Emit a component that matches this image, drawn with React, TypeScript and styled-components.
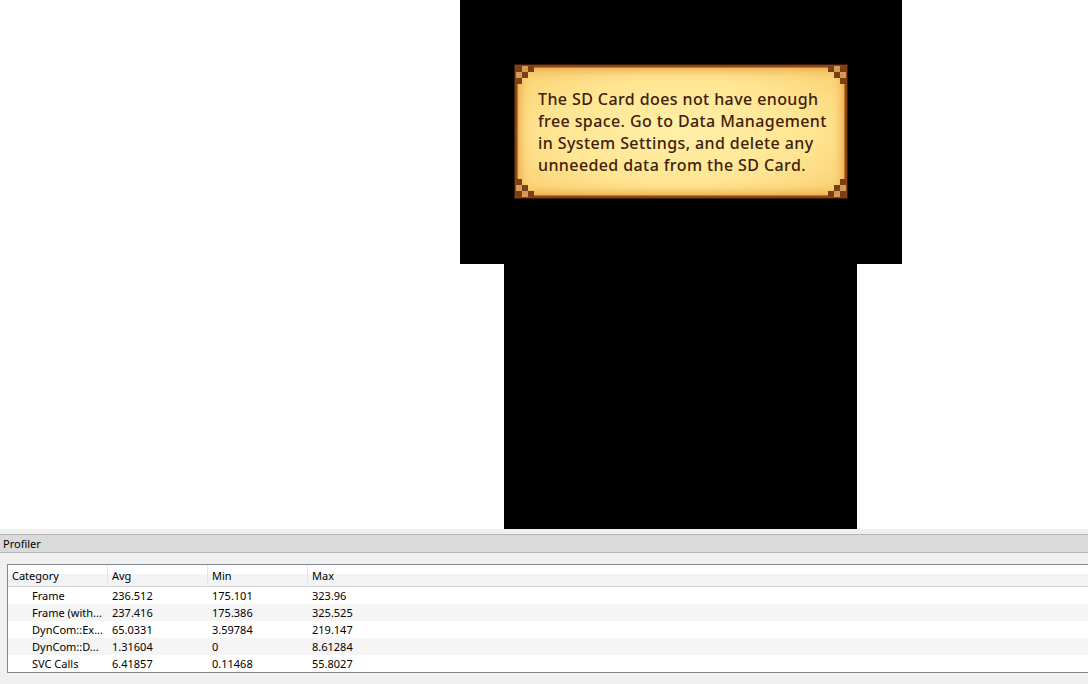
import styled, { createGlobalStyle } from 'styled-components';

const GlobalStyle = createGlobalStyle`
  html, body {
    margin: 0;
    padding: 0;
    background: #ffffff;
  }
  body {
    font-family: 'Noto Sans', 'Liberation Sans', sans-serif;
  }
`;

const ROWS = [
  { name: 'Frame', avg: '236.512', min: '175.101', max: '323.96' },
  { name: 'Frame (with...', avg: '237.416', min: '175.386', max: '325.525' },
  { name: 'DynCom::Ex...', avg: '65.0331', min: '3.59784', max: '219.147' },
  { name: 'DynCom::D...', avg: '1.31604', min: '0', max: '8.61284' },
  { name: 'SVC Calls', avg: '6.41857', min: '0.11468', max: '55.8027' },
];

const Corner = ({ flipX, flipY }: { flipX?: boolean; flipY?: boolean }) => (
  <CornerBox $flipX={flipX} $flipY={flipY}>
    <svg width="18" height="18" viewBox="0 0 18 18">
      <rect x="6" y="0" width="6" height="6" fill="#d69b55" />
      <rect x="0" y="6" width="6" height="6" fill="#d69b55" />
      <rect x="0" y="0" width="6" height="6" fill="#7a3f14" />
      <rect x="12" y="0" width="6" height="6" fill="#7a3f14" />
      <rect x="6" y="6" width="6" height="6" fill="#7a3f14" />
      <rect x="0" y="12" width="6" height="6" fill="#7a3f14" />
    </svg>
  </CornerBox>
);

const App = () => {
  return (
    <Page>
      <GlobalStyle />
      <Screens>
        <TopScreen>
          <Dialog>
            <Corner />
            <Corner flipX />
            <Corner flipY />
            <Corner flipX flipY />
            <Message>
              The SD Card does not have enough
              <br />
              free space. Go to Data Management
              <br />
              in System Settings, and delete any
              <br />
              unneeded data from the SD Card.
            </Message>
          </Dialog>
        </TopScreen>
        <BottomScreen />
      </Screens>
      <Dock>
        <DockTitle>Profiler</DockTitle>
        <DockBody>
          <Table>
            <HeaderRow>
              <HeaderCell>Category</HeaderCell>
              <HeaderCell>Avg</HeaderCell>
              <HeaderCell>Min</HeaderCell>
              <HeaderCell $last>Max</HeaderCell>
            </HeaderRow>
            {ROWS.map((row, i) => (
              <Row key={row.name} $alt={i % 2 === 1}>
                <Cell $indent>{row.name}</Cell>
                <Cell>{row.avg}</Cell>
                <Cell>{row.min}</Cell>
                <Cell>{row.max}</Cell>
              </Row>
            ))}
          </Table>
        </DockBody>
      </Dock>
    </Page>
  );
};

const Page = styled.div`
  display: flex;
  flex-direction: column;
  width: 1088px;
  height: 684px;
  overflow: hidden;
`;

const Screens = styled.div`
  display: flex;
  flex-direction: column;
  height: 529px;
  background: #ffffff;
`;

const TopScreen = styled.div`
  margin-left: 460px;
  width: 442px;
  height: 264px;
  background: #000000;
  display: flex;
  padding: 64px 0 0 54px;
  box-sizing: border-box;
`;

const BottomScreen = styled.div`
  margin-left: 504px;
  width: 353px;
  height: 265px;
  background: #000000;
`;

const Dialog = styled.div`
  position: relative;
  width: 334px;
  height: 135px;
  box-sizing: border-box;
  border: 1px solid #3a1806;
  background: radial-gradient(ellipse at center, #fff0a8 0%, #ffe592 55%, #f8cc6c 100%);
  box-shadow: inset 0 0 0 2px #8a4714, inset 0 0 0 3px #c0782c, inset 0 0 10px 5px #eba648;
  display: flex;
  align-items: center;
  padding-left: 23px;
`;

const CornerBox = styled.div<{ $flipX?: boolean; $flipY?: boolean }>`
  position: absolute;
  width: 18px;
  height: 18px;
  top: ${({ $flipY }) => ($flipY ? 'auto' : '1px')};
  bottom: ${({ $flipY }) => ($flipY ? '1px' : 'auto')};
  left: ${({ $flipX }) => ($flipX ? 'auto' : '1px')};
  right: ${({ $flipX }) => ($flipX ? '1px' : 'auto')};
  transform: scale(${({ $flipX }) => ($flipX ? -1 : 1)}, ${({ $flipY }) => ($flipY ? -1 : 1)});

  svg {
    display: block;
  }
`;

const Message = styled.div`
  font-family: 'Noto Sans', sans-serif;
  font-weight: 500;
  font-size: 16px;
  letter-spacing: 0.4px;
  line-height: 22px;
  color: #40200a;
  white-space: nowrap;
`;

const Dock = styled.div`
  flex: 1;
  display: flex;
  flex-direction: column;
  background: #f0f0f0;
  padding-top: 5px;
  font-size: 11px;
  color: #000000;
`;

const DockTitle = styled.div`
  height: 17px;
  line-height: 18px;
  padding-left: 3px;
  background: #dadada;
  border-top: 1px solid #b5b5b5;
  border-bottom: 1px solid #b5b5b5;
`;

const DockBody = styled.div`
  flex: 1;
  padding: 11px 0 0 7px;
`;

const Table = styled.div`
  width: 1100px;
  background: #ffffff;
  border: 1px solid #828790;
`;

const HeaderRow = styled.div`
  display: grid;
  grid-template-columns: 100px 100px 100px 1fr;
  height: 21px;
  background: linear-gradient(to bottom, #ffffff 0%, #ffffff 43%, #f3f4f6 43%, #f1f2f4 100%);
  border-bottom: 1px solid #d5d5d5;
`;

const HeaderCell = styled.div<{ $last?: boolean }>`
  line-height: 22px;
  padding-left: 4px;
  border-right: ${({ $last }) => ($last ? 'none' : '1px solid #e5e5e5')};
`;

const Row = styled.div<{ $alt?: boolean }>`
  display: grid;
  grid-template-columns: 100px 100px 100px 1fr;
  height: 17px;
  background: ${({ $alt }) => ($alt ? '#f5f5f5' : '#ffffff')};
`;

const Cell = styled.div<{ $indent?: boolean }>`
  line-height: 18px;
  padding-left: ${({ $indent }) => ($indent ? '24px' : '4px')};
  white-space: nowrap;
  overflow: hidden;
`;

export default App;
